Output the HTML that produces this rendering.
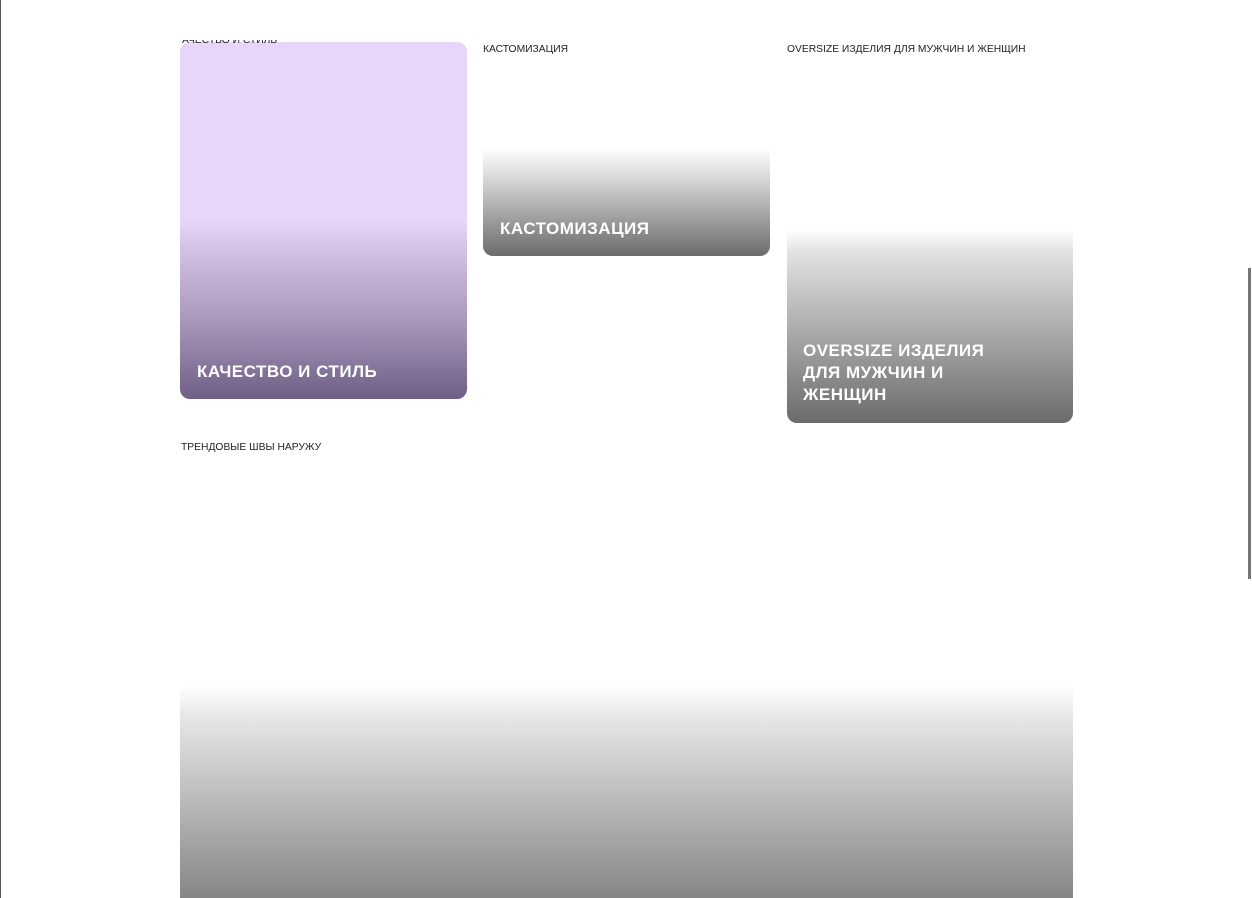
<!DOCTYPE html>
<html><head><meta charset="utf-8"><style>
html,body{margin:0;padding:0;width:1252px;height:898px;overflow:hidden;}
body{background:#fff;position:relative;font-family:"Liberation Sans","DejaVu Sans",sans-serif;}
.lb{position:absolute;left:0;top:0;width:1px;height:898px;background:#555;}
.sb{position:absolute;left:1248px;top:268px;width:3px;height:311px;background:#777;}
.lab{position:absolute;font-size:10.3px;color:#222;white-space:nowrap;}
.card{position:absolute;border-radius:10px;overflow:hidden;}
.t{position:absolute;color:#fff;font-weight:bold;font-size:17px;letter-spacing:0.5px;line-height:22px;}
</style></head><body>
<div class="lb"></div>
<div class="sb"></div>

<div class="card" style="left:180px;top:42px;width:287px;height:357px;background:linear-gradient(#e8d6fa 0,#e8d6fa 178px,#d5c3e6 205px,#a996bb 280px,#6f5f85 357px);">
<div class="t" style="left:17px;top:319px;">КАЧЕСТВО И СТИЛЬ</div></div>
<div style="position:absolute;left:182px;top:40px;width:200px;height:8px;overflow:hidden;z-index:2;">
<div class="lab" style="left:-6px;top:-5px;">КАЧЕСТВО И СТИЛЬ</div></div>

<div class="lab" style="left:483px;top:44px;">КАСТОМИЗАЦИЯ</div>
<div class="card" style="left:483px;top:100px;width:287px;height:156px;background:linear-gradient(#fff 0,#fff 48px,#dcdcdc 75px,#6b6b6b 156px);">
<div class="t" style="left:17px;top:118px;">КАСТОМИЗАЦИЯ</div></div>

<div class="lab" style="left:787px;top:44px;">OVERSIZE ИЗДЕЛИЯ ДЛЯ МУЖЧИН И ЖЕНЩИН</div>
<div class="card" style="left:787px;top:150px;width:286px;height:273px;background:linear-gradient(#fff 0,#fff 80px,#e2e2e2 102px,#6b6b6b 273px);">
<div class="t" style="left:16px;top:190px;width:200px;">OVERSIZE ИЗДЕЛИЯ ДЛЯ МУЖЧИН И ЖЕНЩИН</div></div>

<div class="lab" style="left:181px;top:442px;">ТРЕНДОВЫЕ ШВЫ НАРУЖУ</div>
<div class="card" style="left:180px;top:600px;width:893px;height:298px;border-radius:10px 10px 0 0;background:linear-gradient(#fff 0,#fff 86px,#e8e8e8 115px,#7a7a7a 320px);"></div>
</body></html>
